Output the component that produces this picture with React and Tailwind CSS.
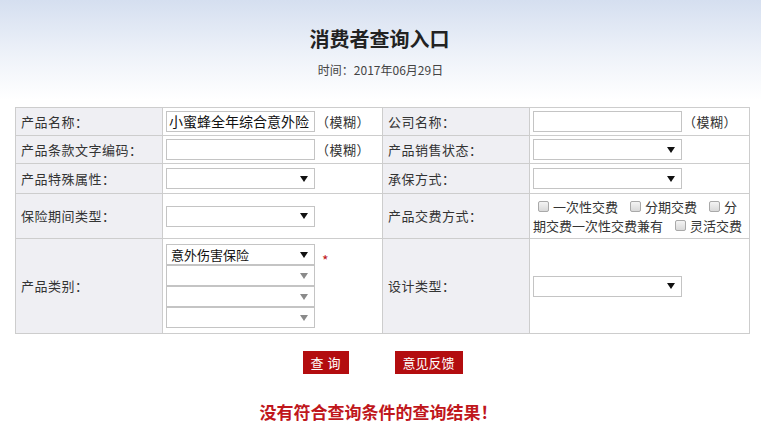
import React from "react";

const font = { fontFamily: '"Noto Sans CJK SC", "Noto Sans", sans-serif' };

function Arrow({ gray }) {
  return (
    <svg width="8" height="6" viewBox="0 0 8 6" className="shrink-0">
      <path d="M0 0 L8 0 L4 6 Z" fill={gray ? "#8a8a8a" : "#111"} />
    </svg>
  );
}

function Select({ value = "", gray = false }) {
  return (
    <div className="w-[149px] h-[21px] border border-[#c4c4c4] bg-white flex items-center justify-between pl-[4px] pr-[6px] text-[13px] leading-[19px] text-[#111]">
      <span>{value}</span>
      <Arrow gray={gray} />
    </div>
  );
}

function Input({ value = "" }) {
  return (
    <div className="w-[149px] h-[21px] border border-[#c4c4c4] bg-white flex items-center pl-[2px] text-[14px] leading-[19px] text-[#111] overflow-hidden whitespace-nowrap">
      {value}
    </div>
  );
}

function Check() {
  return (
    <span className="inline-block w-[11px] h-[11px] border border-[#a9a9a9] rounded-[2px] bg-gradient-to-b from-[#f4f4f4] to-[#d9d9d9] mr-[4px] shrink-0" />
  );
}

const Fuzzy = () => <span className="ml-[1px] text-[13px] leading-[16px] text-[#333] tracking-[0.5px]">（模糊）</span>;

export default function App() {
  const label = "bg-[#efeff3] border border-[#cdcdcd] pl-[5px] p-0 text-[13px] leading-[16px] text-[#333] tracking-[0.5px] align-middle";
  const val = "bg-white border border-[#cdcdcd] pl-[3px] p-0 text-[13px] leading-[16px] align-middle";
  return (
    <div
      style={font}
      className="w-[761px] h-[445px] overflow-hidden bg-[linear-gradient(to_bottom,#d5dff0_0px,#eef2f9_55px,#ffffff_100px)]"
    >
      <div className="pt-[27px] flex flex-col items-center">
        <div className="text-[20px] leading-[24px] font-bold text-[#222] -ml-[2px]">消费者查询入口</div>
        <div className="mt-[11px] text-[12px] leading-[16px] text-[#444]">时间：2017年06月29日</div>
      </div>

      <table className="mt-[29px] ml-[15px] w-[734px] table-fixed border-collapse">
        <colgroup>
          <col className="w-[147px]" />
          <col className="w-[220px]" />
          <col className="w-[147px]" />
          <col className="w-[220px]" />
        </colgroup>
        <tbody>
          <tr className="h-[28px]">
            <td className={label}>产品名称：</td>
            <td className={val}>
              <div className="flex items-center">
                <Input value="小蜜蜂全年综合意外险" />
                <Fuzzy />
              </div>
            </td>
            <td className={label}>公司名称：</td>
            <td className={val}>
              <div className="flex items-center">
                <Input />
                <Fuzzy />
              </div>
            </td>
          </tr>
          <tr className="h-[28px]">
            <td className={label}>产品条款文字编码：</td>
            <td className={val}>
              <div className="flex items-center">
                <Input />
                <Fuzzy />
              </div>
            </td>
            <td className={label}>产品销售状态：</td>
            <td className={val}>
              <Select />
            </td>
          </tr>
          <tr className="h-[30px]">
            <td className={label}>产品特殊属性：</td>
            <td className={val}>
              <Select />
            </td>
            <td className={label}>承保方式：</td>
            <td className={val}>
              <Select />
            </td>
          </tr>
          <tr className="h-[45px]">
            <td className={label}>保险期间类型：</td>
            <td className={val}>
              <Select />
            </td>
            <td className={label}>产品交费方式：</td>
            <td className={val}>
              <div className="w-[213px] text-[13px] text-[#333] leading-[19px] whitespace-nowrap">
                <div className="flex items-center">
                  <span className="ml-[5px] flex items-center"><Check /><span>一次性交费</span></span>
                  <span className="ml-[12px] flex items-center"><Check /><span>分期交费</span></span>
                  <span className="ml-[12px] flex items-center"><Check /><span>分</span></span>
                </div>
                <div className="flex items-center">
                  <span>期交费一次性交费兼有</span>
                  <span className="ml-[12px] flex items-center"><Check /><span>灵活交费</span></span>
                </div>
              </div>
            </td>
          </tr>
          <tr className="h-[95px]">
            <td className={label}>产品类别：</td>
            <td className={val}>
              <div className="flex items-start">
                <div className="flex flex-col">
                  <Select value="意外伤害保险" />
                  <Select gray />
                  <Select gray />
                  <Select gray />
                </div>
                <span className="ml-[7px] mt-[10px] text-[#c0171c] text-[14px] leading-[13px]">*</span>
              </div>
            </td>
            <td className={label}>设计类型：</td>
            <td className={val}>
              <Select />
            </td>
          </tr>
        </tbody>
      </table>

      <div className="mt-[17px] flex justify-center gap-[46px] pl-[4px]">
        <div className="w-[46px] h-[23px] bg-[#b30d0f] text-white text-[13px] leading-[16px] flex items-center justify-center tracking-[4px] pl-[4px]">查询</div>
        <div className="w-[68px] h-[23px] bg-[#b30d0f] text-white text-[13px] leading-[16px] flex items-center justify-center">意见反馈</div>
      </div>

      <div className="mt-[26px] text-center text-[17px] leading-[24px] font-bold text-[#c0171c] -ml-[4px]">没有符合查询条件的查询结果！</div>
    </div>
  );
}
